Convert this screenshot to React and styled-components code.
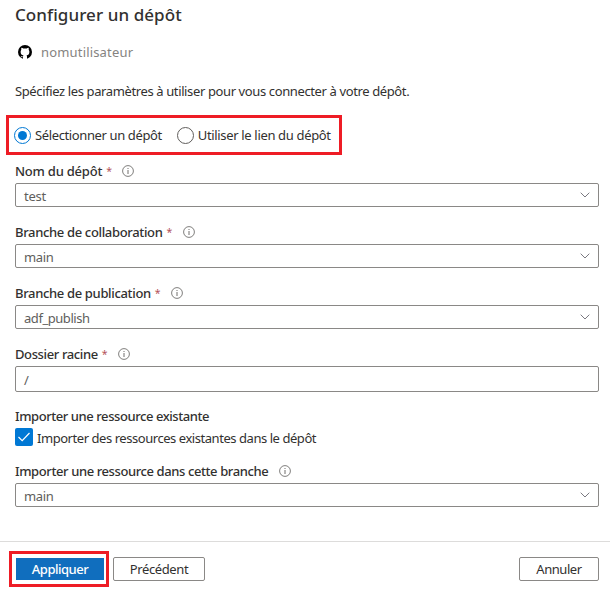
import React from "react";
import styled, { createGlobalStyle } from "styled-components";

const GlobalStyle = createGlobalStyle`
  * { box-sizing: border-box; }
  body {
    margin: 0;
    background: #fff;
    color: #323130;
    font-family: "Noto Sans", "Open Sans", sans-serif;
    font-size: 13px;
    overflow: hidden;
  }
`;

const Panel = styled.main`
  display: flex;
  flex-direction: column;
  width: 610px;
  height: 593px;
  background: #fff;
`;

const Text = styled.span`
  white-space: nowrap;
  letter-spacing: ${(p) => p.$track ?? -0.38}px;
`;

const Title = styled.h1`
  margin: 0;
  padding-left: 15px;
  height: 30px;
  line-height: 30px;
  font-size: 17px;
  font-weight: 500;
`;

const Account = styled.div`
  display: flex;
  align-items: center;
  gap: 9px;
  height: 20px;
  margin-top: 12px;
  padding-left: 18px;
  color: #858381;
`;

const Intro = styled.p`
  margin: 19px 0 0 15px;
  height: 20px;
  line-height: 20px;
`;

const RadioFrame = styled.div`
  display: flex;
  align-items: center;
  gap: 15px;
  width: 336px;
  height: 40px;
  margin: 14px 0 4px 6px;
  padding-left: 5px;
  border: 3px solid #ee1c25;
`;

const RadioOption = styled.label`
  display: flex;
  align-items: center;
  gap: 4px;
`;

const RadioMark = styled.span`
  display: grid;
  place-items: center;
  width: 17px;
  height: 17px;
  border: 1px solid ${(p) => (p.$checked ? "#0078d4" : "#605e5c")};
  border-radius: 50%;

  &::after {
    content: "";
    width: 9px;
    height: 9px;
    border-radius: 50%;
    background: ${(p) => (p.$checked ? "#0078d4" : "transparent")};
  }
`;

const Form = styled.form`
  display: flex;
  flex-direction: column;
  padding: 0 11px 0 15px;
`;

const Field = styled.div`
  margin-bottom: ${(p) => p.$after ?? 13}px;
`;

const FieldLabel = styled.div`
  display: flex;
  align-items: center;
  height: 24px;
  font-weight: 500;
`;

const Required = styled.span`
  width: 5px;
  margin-left: 4px;
  color: #b4535a;
  font-weight: 400;
  font-size: 10.5px;
`;

const InfoSvg = styled.svg`
  margin: 0 0 1px 11px;
  flex: none;
`;

const Control = styled.div`
  display: flex;
  align-items: center;
  justify-content: space-between;
  height: ${(p) => p.$height || 24}px;
  padding: 2px 8px 0 8px;
  border: 1px solid #8a8886;
  border-radius: 2px;
  color: #605e5c;
`;

const ChevronSvg = styled.svg`
  margin: -3px 0 0;
`;

const CheckRow = styled.label`
  display: flex;
  align-items: center;
  gap: 4px;
  height: 18px;
`;

const CheckLabel = styled.span`
  padding-top: 2px;
`;

const CheckMark = styled.span`
  display: grid;
  place-items: center;
  width: 18px;
  height: 18px;
  border-radius: 2px;
  background: #0078d4;
`;

const Footer = styled.footer`
  display: flex;
  align-items: center;
  height: 52px;
  margin-top: 34px;
  padding: 3px 11px 0 9px;
  border-top: 1px solid #dddcdb;
`;

const PrimaryFrame = styled.div`
  display: grid;
  place-items: center;
  width: 100px;
  height: 36px;
  margin-right: 4px;
  padding-left: 2px;
  border: 3px solid #ee1c25;
`;

const Button = styled.button`
  width: ${(p) => p.$width}px;
  height: ${(p) => (p.$primary ? 22 : 24)}px;
  margin: 0;
  margin-left: ${(p) => (p.$end ? "auto" : 0)};
  padding: 0;
  border: ${(p) => (p.$primary ? "0" : "1px solid #8a8886")};
  border-radius: ${(p) => (p.$primary ? 0 : 2)}px;
  background: ${(p) => (p.$primary ? "#106ebe" : "#fff")};
  color: ${(p) => (p.$primary ? "#fff" : "#323130")};
  font: ${(p) => (p.$primary ? 500 : 400)} 13px/20px "Noto Sans", "Open Sans", sans-serif;
`;

function GitHubMark() {
  return (
    <svg width="14" height="14" viewBox="0 0 14 14">
      <circle cx="7" cy="7" r="7" fill="#000" />
      <path
        d="M5 14v-1.9c-1.3.3-1.9-.4-2.3-1.2.9 0 1.200.9 2.300.5.1-.4.2-.7.5-1C3.700 10.100 2.600 9.100 2.600 6.700c0-.8.3-1.500.7-2-.1-.6-.1-1.300.1-1.900.8 0 1.400.4 1.900.8a7 7 0 0 1 3.400 0c.5-.4 1.100-.8 1.900-.8.2.6.2 1.300.1 1.900.4.5.7 1.200.7 2 0 2.400-1.100 3.400-2.900 3.700.4.4.5.8.5 1.400V14z"
        fill="#fff"
      />
    </svg>
  );
}

function Info() {
  return (
    <InfoSvg width="12" height="12" viewBox="0 0 12 12" fill="none" stroke="#605e5c">
      <circle cx="6" cy="6" r="5.4" strokeWidth="0.8" />
      <path d="M6 5v4M6 3v1" strokeWidth="0.9" />
    </InfoSvg>
  );
}

function Chevron() {
  return (
    <ChevronSvg width="10" height="6" viewBox="0 0 10 6" fill="none" stroke="#7a7980">
      <path d="M.7.7 5 5 9.3.7" />
    </ChevronSvg>
  );
}

function FormField({ label, track, value, valueTrack, required = true, select = true, height, after }) {
  return (
    <Field $after={after}>
      <FieldLabel>
        <Text $track={track}>{label}</Text>
        {required && <Required>*</Required>}
        <Info />
      </FieldLabel>
      <Control $height={height}>
        <Text $track={valueTrack}>{value}</Text>
        {select && <Chevron />}
      </Control>
    </Field>
  );
}

export default function App() {
  return (
    <Panel>
      <GlobalStyle />
      <Title><Text $track={0.07}>Configurer un dépôt</Text></Title>
      <Account><GitHubMark /><Text $track={0.17}>nomutilisateur</Text></Account>
      <Intro><Text>Spécifiez les paramètres à utiliser pour vous connecter à votre dépôt.</Text></Intro>
      <RadioFrame>
        <RadioOption><RadioMark $checked /><Text>Sélectionner un dépôt</Text></RadioOption>
        <RadioOption><RadioMark /><Text $track={-0.34}>Utiliser le lien du dépôt</Text></RadioOption>
      </RadioFrame>
      <Form>
        <FormField label="Nom du dépôt" track={-0.22} value="test" valueTrack={-0.25} />
        <FormField label="Branche de collaboration" track={-0.34} value="main" />
        <FormField label="Branche de publication" track={-0.34} value="adf_publish" valueTrack={-0.45} />
        <FormField label="Dossier racine" value="/" select={false} height={26} after={12} />
        <Field>
          <FieldLabel><Text $track={-0.43}>Importer une ressource existante</Text></FieldLabel>
          <CheckRow>
            <CheckMark>
              <svg width="14" height="12" viewBox="0 0 14 12" fill="none" stroke="#fff">
                <path d="m1.5 6 3.7 3.7L12.5 2" strokeWidth="1.2" />
              </svg>
            </CheckMark>
            <CheckLabel><Text $track={-0.45}>Importer des ressources existantes dans le dépôt</Text></CheckLabel>
          </CheckRow>
        </Field>
        <FormField label="Importer une ressource dans cette branche" track={-0.4} value="main" required={false} after={0} />
      </Form>
      <Footer>
        <PrimaryFrame><Button type="button" $primary $width={88}><Text $track={-0.5}>Appliquer</Text></Button></PrimaryFrame>
        <Button type="button" $width={92}><Text>Précédent</Text></Button>
        <Button type="button" $width={80} $end><Text $track={-0.45}>Annuler</Text></Button>
      </Footer>
    </Panel>
  );
}
